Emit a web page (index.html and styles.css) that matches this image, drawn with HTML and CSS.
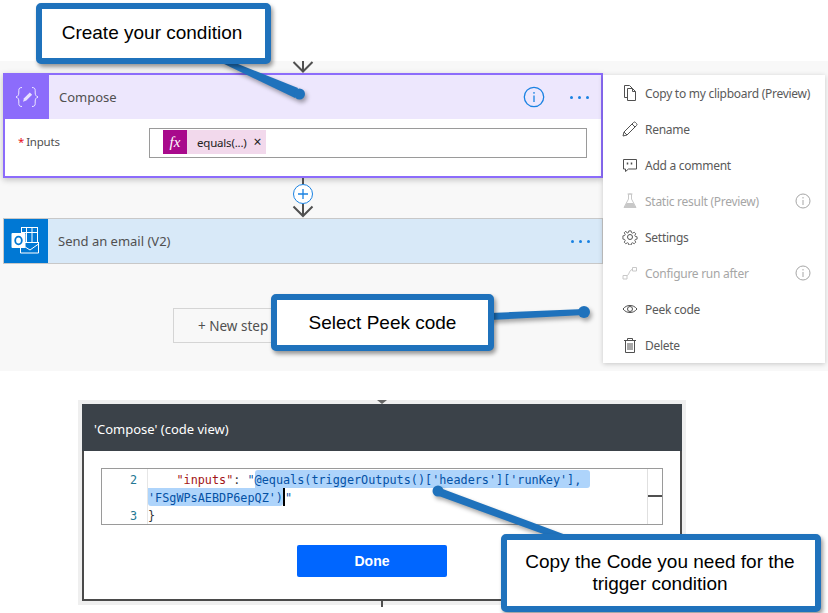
FILE: index.html
```html
<!DOCTYPE html>
<html lang="en">
<head>
<meta charset="utf-8">
<title>Peek code trigger condition</title>
<link rel="stylesheet" href="styles.css">
</head>
<body>
<div class="page">
  <section class="designer">
    <div class="flow">
      <svg class="stem stem-top" width="24" height="12" viewBox="0 0 24 12"><path d="M2.500 1 L12 10.500 L21.500 1 M12 0 V10" class="arrow"/></svg>
      <article class="card card-compose">
        <header class="card-head head-compose">
          <div class="card-icon icon-compose">
            <svg width="44" height="44" viewBox="0 0 44 44"><path d="M17 12.500c-2.300 0-3.200 1-3.200 3v2.500c0 2-1 3.400-2.800 4 1.800.6 2.800 2 2.800 4v2.500c0 2 .9 3 3.200 3M27 12.500c2.300 0 3.200 1 3.200 3v2.500c0 2 1 3.400 2.800 4-1.800.6-2.800 2-2.800 4v2.500c0 2-.9 3-3.200 3" class="glyph-line"/><path d="M18 26.800 19 23.300 24.800 17.500l2.300 2.300-5.800 5.800z" fill="#fff" opacity=".8"/></svg>
          </div>
          <span class="card-title">Compose</span>
          <svg class="head-info" width="22" height="22" viewBox="0 0 22 22"><circle cx="11" cy="11" r="9.700" class="info-ring"/><path d="M11 9.500v6.500M11 6v1.800" class="info-ring"/></svg>
          <div class="more"><i></i><i></i><i></i></div>
        </header>
        <div class="card-body">
          <label class="input-label"><span class="req">*</span>Inputs</label>
          <div class="input-box">
            <span class="token"><span class="token-fx">fx</span><span class="token-text">equals(...)</span><span class="token-x">×</span></span>
          </div>
        </div>
      </article>
      <div class="link">
        <svg width="24" height="40" viewBox="0 0 24 40"><path d="M12 0v6M12 26v12" class="arrow"/><circle cx="12" cy="16" r="9.500" fill="#fff" stroke="#1a82e2" stroke-width="1"/><path d="M7 16h10M12 11v10" stroke="#1a82e2" stroke-width="1.300" fill="none"/><path d="M2.500 28.500 12 38l9.500-9.500" class="arrow"/></svg>
      </div>
      <article class="card card-email">
        <div class="card-icon icon-email">
          <svg width="44" height="44" viewBox="0 0 44 44"><g fill="none" stroke="#fff" stroke-width="1"><rect x="17.500" y="8.500" width="16" height="15"/><path d="M17.500 13.500h16M22.500 8.500v15M28 8.500v15M34.500 23v11h-18v-5M18 26l8 5 8.500-6"/></g><rect x="7.500" y="14" width="14" height="15" rx="1" fill="#fff"/><ellipse cx="14.500" cy="21.500" rx="3.300" ry="3.900" fill="none" stroke="#0078d4" stroke-width="1.800"/></svg>
        </div>
        <span class="card-title title-email">Send an email (V2)</span>
        <div class="more more-email"><i></i><i></i><i></i></div>
      </article>
      <div class="new-step"><span>+ New step</span></div>
    </div>
    <nav class="menu">
      <div class="menu-item"><svg class="menu-icon" width="16" height="16" viewBox="0 0 16 16"><path d="M5.500 3.500h5l3 3v9h-8zM10.500 3.500v3h3M5.500 12.500h-3V.500h5l3 3" class="mi"/></svg><span>Copy to my clipboard (Preview)</span></div>
      <div class="menu-item"><svg class="menu-icon" width="16" height="16" viewBox="0 0 16 16"><path d="M1 15l1-4L11.500 1.500a1.400 1.400 0 0 1 2 0l1 1a1.400 1.400 0 0 1 0 2L5 14zM2 11l3 3M10 3l3 3" class="mi"/></svg><span>Rename</span></div>
      <div class="menu-item"><svg class="menu-icon" width="16" height="16" viewBox="0 0 16 16"><path d="M1.500 2.500h13v9.500h-8l-3 2.500v-2.500h-2z" class="mi"/><path d="M5.500 5.500v2M9.500 5.500v2" class="mi mi-bold"/></svg><span>Add a comment</span></div>
      <div class="menu-item is-off"><svg class="menu-icon" width="16" height="16" viewBox="0 0 16 16"><path d="M5.500 1h5M6.500 1v5L2 14.500h12L9.500 6V1z" class="mi"/><path d="M4.500 10h7l2.500 4.800H2z" fill="#c8c8c8"/></svg><span>Static result (Preview)</span><svg class="menu-info" width="16" height="16" viewBox="0 0 16 16"><circle cx="8" cy="8" r="7" class="mi"/><path d="M8 7v5M8 4v1.500" class="mi"/></svg></div>
      <div class="menu-item"><svg class="menu-icon" width="16" height="16" viewBox="0 0 16 16"><circle cx="8" cy="8" r="2.500" class="mi"/><path d="M6.700 1h2.600l.4 2 1.300.6 1.800-1.100 1.800 1.800-1.100 1.800.6 1.300 2 .4v2.600l-2 .4-.6 1.300 1.100 1.800-1.800 1.800-1.800-1.100-1.300.6-.4 2H6.700l-.4-2-1.300-.6-1.800 1.100-1.800-1.800 1.100-1.800-.6-1.300-2-.4V6.700l2-.4.6-1.300-1.100-1.800 1.800-1.800L4.800 3.500 6.100 3z" class="mi" transform="translate(1 1) scale(.875)"/></svg><span>Settings</span></div>
      <div class="menu-item is-off"><svg class="menu-icon" width="16" height="16" viewBox="0 0 16 16"><path d="M1 10.500h4v3.500H1zM5 10.500c2 0 2-5 5-6M10.500 2.500h4V6h-4z" class="mi"/></svg><span>Configure run after</span><svg class="menu-info" width="16" height="16" viewBox="0 0 16 16"><circle cx="8" cy="8" r="7" class="mi"/><path d="M8 7v5M8 4v1.500" class="mi"/></svg></div>
      <div class="menu-item"><svg class="menu-icon" width="16" height="16" viewBox="0 0 16 16"><path d="M1 8c2-2.500 4.300-3.500 7-3.500s5 1 7 3.500c-2 2.500-4.300 3.500-7 3.500S3 10.500 1 8z" class="mi"/><circle cx="8" cy="8" r="2.500" class="mi"/></svg><span>Peek code</span></div>
      <div class="menu-item"><svg class="menu-icon" width="16" height="16" viewBox="0 0 16 16"><path d="M2 3.500h12M5.500 3.500V1.500h5v2M3.500 3.500v12h9v-12M6 6v7M8 6v7M10 6v7" class="mi"/></svg><span>Delete</span></div>
    </nav>
  </section>
  <section class="lower">
    <div class="caret"></div>
    <div class="dialog">
      <header class="dialog-head">'Compose' (code view)</header>
      <div class="dialog-body">
        <div class="editor">
          <div class="gutter">
            <span class="ln">2</span>
            <span class="ln"></span>
            <span class="ln">3</span>
          </div>
          <div class="code">
            <div class="code-line">    <span class="key">"inputs"</span>: <span class="val">"</span><span class="sel sel-first">@equals(triggerOutputs()['headers']['runKey'],</span></div>
            <div class="code-line"><span class="sel sel-second">'FSgWPsAEBDP6epQZ')</span><span class="cursor"></span><span class="val">"</span></div>
            <div class="code-line">}</div>
          </div>
          <div class="scroll"><i></i></div>
        </div>
        <button class="done" type="button">Done</button>
      </div>
    </div>
    <div class="tail"></div>
  </section>

  <svg class="leaders" width="828" height="613" viewBox="0 0 828 613">
    <g fill="#1f72bc">
      <path d="M220 62 L233 62 L298 88 L295 98z"/>
      <circle cx="299.500" cy="94" r="5.500"/>
      <path d="M490 313 L584 309 L584 315 L490 320z"/>
      <circle cx="584" cy="312" r="6"/>
      <path d="M440 488 L566 535 L546 535 L436 495z"/>
      <circle cx="438" cy="491" r="5.500"/>
    </g>
  </svg>
  <div class="callout callout-a">Create your condition</div>
  <div class="callout callout-b">Select Peek code</div>
  <div class="callout callout-c">Copy the Code you need for the trigger condition</div>
</div>
</body>
</html>
```
FILE: styles.css
```css
* { box-sizing: border-box; }
html, body { margin: 0; padding: 0; background: #fff; }
.page {
  position: relative;
  width: 828px;
  height: 613px;
  overflow: hidden;
  padding-top: 61px;
  font-family: "Noto Sans", "Open Sans", sans-serif;
  font-size: 12px;
  color: #505050;
}
.designer {
  height: 310px;
  background: #f8f8f8;
  display: flex;
  align-items: flex-start;
}
.flow {
  width: 603px;
  padding-left: 3px;
  flex: none;
  display: flex;
  flex-direction: column;
  align-items: center;
}
.stem { display: block; flex: none; }
.arrow { fill: none; stroke: #505050; stroke-width: 2; }
.card {
  width: 600px;
  flex: none;
}
.card-compose {
  height: 105px;
  border: 2px solid #8c6cfb;
  background: #fff;
  box-shadow: 0 2px 6px rgba(0,0,0,.22);
}
.card-head { display: flex; align-items: center; height: 44px; }
.head-compose { background: #ede7fd; }
.card-icon { width: 44px; height: 44px; flex: none; }
.card-icon svg { display: block; }
.icon-compose { background: #8c6cfb; }
.glyph-line { fill: none; stroke: #fff; stroke-width: 1; opacity: .85; }
.card-title { margin-left: 10px; font-size: 13px; color: #505050; }
.head-info { margin-left: auto; margin-right: 25px; flex: none; }
.info-ring { fill: none; stroke: #1a82e2; stroke-width: 1.300; }
.more { display: flex; gap: 5px; width: 19px; margin-right: 12px; flex: none; }
.more i { width: 3px; height: 3px; background: #1a82e2; border-radius: 50%; display: block; }
.card-body { display: flex; padding: 9px 14px 0 13px; }
.input-label { width: 131px; flex: none; font-size: 11.500px; letter-spacing: -.2px; line-height: 26px; height: 26px; padding-top: 1px; }
.req { color: #e81123; margin-right: 2px; }
.input-box {
  flex: 1;
  height: 30px;
  border: 1px solid #9a9a9a;
  padding: 1px 0 0 13px;
  background: #fff;
}
.token { display: inline-flex; align-items: center; height: 24px; background: #f2d9ec; color: #222; padding-right: 4px; }
.token-fx {
  width: 24px; height: 24px; background: #a80a8c; color: #fff;
  font-family: "Liberation Serif", serif; font-style: italic; font-weight: 400; font-size: 15px;
  display: flex; align-items: center; justify-content: center;
}
.token-text { margin-left: 10px; font-size: 11.500px; letter-spacing: -.2px; }
.token-x { margin-left: 7px; font-size: 14px; line-height: 1; }
.link { height: 40px; flex: none; }
.link svg { display: block; }
.card-email {
  height: 46px;
  border: 1px solid #c8c8c8;
  background: #d8e9f8;
  display: flex;
  align-items: center;
}
.icon-email { background: #0078d4; }
.title-email { margin-left: 10px; flex: 1; }
.more-email { margin-right: 12px; }
.new-step {
  align-self: flex-start;
  margin: 44px 0 0 170px;
  width: 145px;
  height: 35px;
  border: 1px solid #d5d5d5;
  font-size: 13.500px;
  line-height: 35px;
  padding-left: 24px;
}
.menu {
  flex: none;
  width: 222px;
  height: 288px;
  margin-top: 14px;
  background: #fff;
  box-shadow: 0 1px 5px rgba(0,0,0,.2);
}
.menu-item { display: flex; align-items: center; height: 36px; padding-left: 19px; color: #5a5a5a; letter-spacing: -.27px; }
.menu-icon { flex: none; margin-right: 7px; }
.menu-info { flex: none; margin-left: auto; margin-right: 14px; }
.mi { fill: none; stroke: #505050; stroke-width: 1; }
.mi-bold { stroke-width: 1.500; }
.menu-item.is-off { color: #a6a6a6; }
.is-off .mi { stroke: #a6a6a6; }
.is-off .menu-icon .mi { stroke: #c8c8c8; }

.lower { display: flex; flex-direction: column; height: 242px; }
.caret {
  position: relative;
  z-index: 1;
  flex: none;
  margin: 29px 0 0 377px;
  width: 0; height: 0;
  border-left: 5px solid transparent;
  border-right: 5px solid transparent;
  border-top: 4px solid #666;
}
.dialog {
  flex: none;
  width: 600px;
  height: 197px;
  margin-left: 82px;
  border: 2px solid #4a4a4a;
  border-top: 0;
  background: #fff;
  box-shadow: 0 0 0 4px #efefef;
}
.dialog-head {
  height: 47px;
  margin: 0 -2px;
  padding-left: 12px;
  background: #3b4249;
  color: #fff;
  font-size: 13px;
  line-height: 50px;
}
.dialog-body { display: flex; flex-direction: column; align-items: flex-start; padding: 17px 0 0 17px; }
.editor {
  width: 562px;
  height: 57px;
  border: 1px solid #9a9a9a;
  display: flex;
  flex: none;
  background: #fff;
}
.gutter { width: 46px; flex: none; display: flex; flex-direction: column; text-align: right; padding: 1px 10px 0 0; border-right: 1px solid #e6e6e6; }
.ln { height: 18px; line-height: 20px; color: #237893; font-family: "DejaVu Sans Mono", monospace; font-size: 11.800px; }
.code { flex: 1; padding-top: 1px; }
.code-line {
  height: 18px;
  line-height: 20px;
  white-space: pre;
  font-family: "DejaVu Sans Mono", monospace;
  font-size: 11.800px;
  color: #333;
}
.key { color: #a31515; }
.val { color: #0451a5; }
.sel { background: #aed4fb; color: #0451a5; display: inline-block; height: 18px; vertical-align: top; }
.sel-first { padding-right: 9px; border-radius: 3px 3px 3px 0; }
.sel-second { border-radius: 0 0 3px 3px; }
.cursor { display: inline-block; width: 2px; height: 18px; background: #000; vertical-align: top; }
.scroll { width: 15px; flex: none; border-left: 1px solid #e0e0e0; padding-top: 26px; }
.scroll i { display: block; height: 2px; background: #505050; }
.done {
  flex: none;
  width: 150px;
  height: 32px;
  margin: 20px 0 0 196px;
  border: 0;
  border-radius: 2px;
  background: #0066ff;
  color: #fff;
  font-family: "Liberation Sans", Arial, sans-serif;
  font-size: 14px;
  font-weight: 700;
}
.tail { position: relative; z-index: 1; flex: none; width: 2px; height: 6px; margin-left: 381px; background: #505050; }

.leaders { position: absolute; left: 0; top: 0; filter: drop-shadow(2px 3px 2px rgba(0,0,0,.35)); }
.callout {
  position: absolute;
  display: flex;
  align-items: center;
  justify-content: center;
  text-align: center;
  background: #fff;
  border: 6px solid #1f72bc;
  border-radius: 5px;
  box-shadow: 2px 3px 4px rgba(0,0,0,.4);
  font-family: "Liberation Sans", Arial, sans-serif;
  font-size: 19px;
  line-height: 22px;
  color: #000;
}
.callout-a { left: 36px; top: 3px; width: 235px; height: 61px; padding: 0 3px 2px 0; }
.callout-b { left: 271px; top: 294px; width: 223px; height: 57px; }
.callout-c { left: 501px; top: 534px; width: 320px; height: 78px; padding-right: 2px; }
```
